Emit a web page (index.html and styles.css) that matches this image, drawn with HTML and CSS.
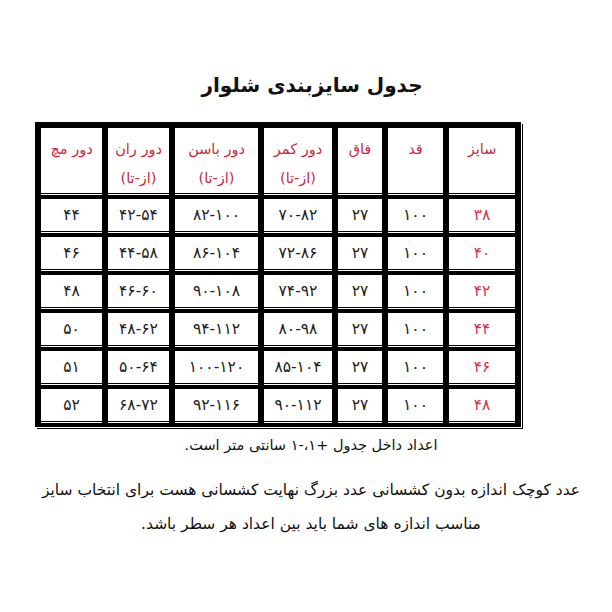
FILE: index.html
```html
<!DOCTYPE html>
<html lang="fa">
<head>
<meta charset="utf-8">
<title>جدول سایزبندی شلوار</title>
<link rel="stylesheet" href="styles.css">
</head>
<body>
<div class="page">
  <h1 class="title" dir="rtl">جدول سایزبندی شلوار</h1>
  <table class="sizes" dir="rtl">
    <thead>
      <tr>
        <th class="c-size">سایز</th>
        <th class="c-qad">قد</th>
        <th class="c-faq">فاق</th>
        <th class="c-kamar">دور کمر<span class="range">(از-تا)</span></th>
        <th class="c-basan">دور باسن<span class="range">(از-تا)</span></th>
        <th class="c-ran">دور ران<span class="range">(از-تا)</span></th>
        <th class="c-moch">دور مچ</th>
      </tr>
    </thead>
    <tbody>
      <tr><td class="size">۳۸</td><td>۱۰۰</td><td>۲۷</td><td class="num">۷۰-۸۲</td><td class="num">۸۲-۱۰۰</td><td class="num">۴۲-۵۴</td><td>۴۴</td></tr>
      <tr><td class="size">۴۰</td><td>۱۰۰</td><td>۲۷</td><td class="num">۷۲-۸۶</td><td class="num">۸۶-۱۰۴</td><td class="num">۴۴-۵۸</td><td>۴۶</td></tr>
      <tr><td class="size">۴۲</td><td>۱۰۰</td><td>۲۷</td><td class="num">۷۴-۹۲</td><td class="num">۹۰-۱۰۸</td><td class="num">۴۶-۶۰</td><td>۴۸</td></tr>
      <tr><td class="size">۴۴</td><td>۱۰۰</td><td>۲۷</td><td class="num">۸۰-۹۸</td><td class="num">۹۴-۱۱۲</td><td class="num">۴۸-۶۲</td><td>۵۰</td></tr>
      <tr><td class="size">۴۶</td><td>۱۰۰</td><td>۲۷</td><td class="num">۸۵-۱۰۴</td><td class="num">۱۰۰-۱۲۰</td><td class="num">۵۰-۶۴</td><td>۵۱</td></tr>
      <tr><td class="size">۴۸</td><td>۱۰۰</td><td>۲۷</td><td class="num">۹۰-۱۱۲</td><td class="num">۹۲-۱۱۶</td><td class="num">۶۸-۷۲</td><td>۵۲</td></tr>
    </tbody>
  </table>
  <div class="notes" dir="rtl">
    <p class="note-small">اعداد داخل جدول +۱،-۱ سانتی متر است.</p>
    <p class="note-big">عدد کوچک اندازه بدون کشسانی عدد بزرگ نهایت کشسانی هست برای انتخاب سایز<br>مناسب اندازه های شما باید بین اعداد هر سطر باشد.</p>
  </div>
</div>
</body>
</html>
```

FILE: styles.css
```css
html, body {
  margin: 0;
  padding: 0;
  background: #fff;
}

.page {
  width: 612px;
  height: 612px;
  padding-top: 62px;
  box-sizing: border-box;
  font-family: "DejaVu Sans", sans-serif;
  color: #111;
}

.title {
  margin: 0;
  height: 60px;
  text-align: center;
  padding-left: 12px;
  font-size: 20px;
  line-height: 46px;
  font-weight: bold;
  color: #111;
}

.sizes {
  margin-left: 35px;
  border-collapse: separate;
  border-spacing: 6px 6px;
  background: #000;
  box-shadow: 1px 1px 0 #fff, 2px 2px 0 #000;
}

.sizes th,
.sizes td {
  background: #fff;
  padding: 0;
  text-align: center;
  box-shadow: 0 1px 0 #000, 0 2px 0 #fff;
}

.sizes th {
  height: 65px;
  vertical-align: top;
  font-weight: normal;
  font-size: 14.5px;
  line-height: 18px;
  color: #c8283e;
  padding-top: 12px;
  box-sizing: border-box;
}

.range {
  display: block;
  margin-top: 11px;
}

.c-size { width: 66px; }
.c-qad { width: 55px; }
.c-faq { width: 44px; }
.c-kamar { width: 68px; }
.c-basan { width: 83px; }
.c-ran { width: 61px; }
.c-moch { width: 61px; }

.sizes tbody td {
  height: 32px;
  font-size: 15.5px;
  color: #222;
}

.sizes td.size {
  color: #d8344e;
}

.sizes td.num {
  direction: ltr;
}

.notes {
  width: 560px;
  margin: 0 auto;
  text-align: center;
  padding-left: 10px;
}

.note-small {
  margin: 6px 0 0 0;
  font-size: 14.5px;
  line-height: 24px;
}

.note-big {
  margin: 16px 0 0 0;
  font-size: 15.5px;
  line-height: 34px;
}
```
